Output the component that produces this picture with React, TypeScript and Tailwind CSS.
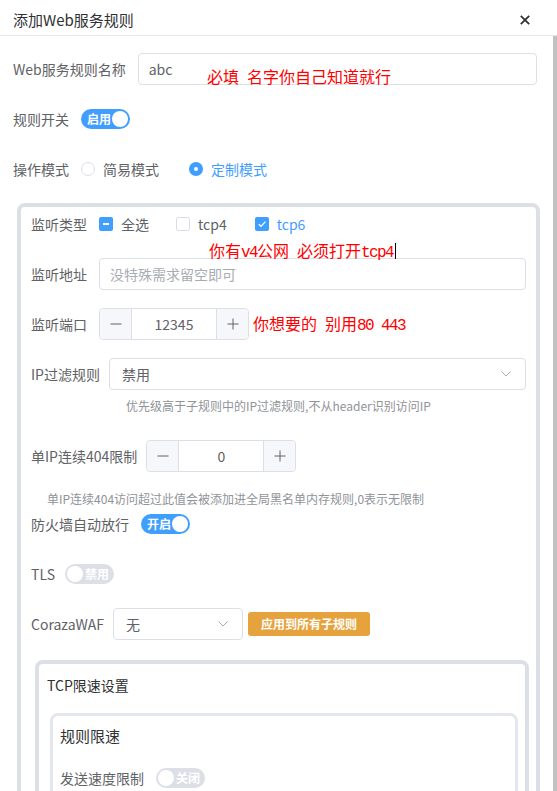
import React from "react";

const L = ({ children }: { children: React.ReactNode }) => (
  <span className="font-['Liberation_Mono',monospace] tracking-[-1.6px]">{children}</span>
);

const Red = ({ children, className = "" }: { children: React.ReactNode; className?: string }) => (
  <div
    className={`whitespace-pre text-[16px] leading-[16px] text-[#ff0000] font-['Noto_Sans_CJK_SC',sans-serif] ${className}`}
  >
    {children}
  </div>
);

const Switch = ({ on, text }: { on: boolean; text: string }) => (
  <div
    className={`flex h-5 w-[49px] shrink-0 items-center rounded-full ${on ? "bg-[#409eff]" : "bg-[#dcdfe6]"}`}
  >
    {on ? (
      <>
        <span className="pl-[6px] text-[12px] font-bold leading-none text-white">{text}</span>
        <span className="ml-auto mr-[2px] h-4 w-4 rounded-full bg-white" />
      </>
    ) : (
      <>
        <span className="ml-[2px] h-4 w-4 rounded-full bg-white" />
        <span className="ml-[2px] text-[12px] font-bold leading-none text-white">{text}</span>
      </>
    )}
  </div>
);

const Chevron = () => (
  <svg width="10" height="6" viewBox="0 0 10 6" className="ml-auto shrink-0">
    <polyline points="0.5,0.5 5,5 9.5,0.5" fill="none" stroke="#a8abb2" strokeWidth="1" />
  </svg>
);

const NumberInput = ({ value }: { value: string }) => (
  <div className="flex h-8 w-[150px] shrink-0 rounded-[4px] border border-[#dcdfe6]">
    <div className="flex w-8 items-center justify-center rounded-l-[4px] border-r border-[#dcdfe6] bg-[#f5f7fa]">
      <svg width="12" height="12" viewBox="0 0 12 12">
        <line x1="0.5" y1="6" x2="11.5" y2="6" stroke="#606266" strokeWidth="1" />
      </svg>
    </div>
    <div className="flex flex-1 items-center justify-center text-[14px] text-[#606266]">{value}</div>
    <div className="flex w-8 items-center justify-center rounded-r-[4px] border-l border-[#dcdfe6] bg-[#f5f7fa]">
      <svg width="12" height="12" viewBox="0 0 12 12">
        <line x1="0.5" y1="6" x2="11.5" y2="6" stroke="#606266" strokeWidth="1" />
        <line x1="6" y1="0.5" x2="6" y2="11.5" stroke="#606266" strokeWidth="1" />
      </svg>
    </div>
  </div>
);

const Label = ({ children, pr = "pr-3" }: { children: React.ReactNode; pr?: string }) => (
  <span className={`shrink-0 whitespace-nowrap ${pr} text-[14px] leading-[20px] text-[#606266]`}>{children}</span>
);

export default function App() {
  return (
    <div className="flex h-[791px] w-[557px] flex-col overflow-hidden bg-white font-['Noto_Sans_CJK_SC',sans-serif] text-[14px] text-[#606266]">
      <header className="flex h-[36px] shrink-0 items-center border-b border-[#e4e7ed] pl-[13px] pr-[27px] pt-[4px]">
        <span className="text-[15px] leading-[20px] text-[#303133]">添加Web服务规则</span>
        <svg width="10" height="10" viewBox="0 0 10 10" className="ml-auto">
          <line x1="0.8" y1="0.8" x2="9.2" y2="9.2" stroke="#303133" strokeWidth="1.8" />
          <line x1="9.2" y1="0.8" x2="0.8" y2="9.2" stroke="#303133" strokeWidth="1.8" />
        </svg>
      </header>

      <div className="flex min-h-0 flex-1">
        <div className="min-w-0 flex-1 pl-[13px] pr-[16px] pt-[17px]">
          {/* Row 1 */}
          <div className="relative flex h-8 items-center">
            <Label>Web服务规则名称</Label>
            <div className="flex h-8 flex-1 items-center rounded-[4px] border border-[#dcdfe6] pl-[10px] text-[14px] text-[#606266]">
              abc
            </div>
            <Red className="absolute left-[194px] top-[15px]">
              必填<L>{" "}</L>名字你自己知道就行
            </Red>
          </div>

          {/* Row 2 */}
          <div className="mt-[18px] flex h-8 items-center">
            <Label>规则开关</Label>
            <Switch on text="启用" />
          </div>

          {/* Row 3 */}
          <div className="mt-[18px] flex h-8 items-center">
            <Label>操作模式</Label>
            <span className="h-[14px] w-[14px] shrink-0 rounded-full border border-[#dcdfe6] bg-white" />
            <span className="ml-2 mr-[30px] leading-[20px] text-[#606266]">简易模式</span>
            <span className="flex h-[14px] w-[14px] shrink-0 items-center justify-center rounded-full bg-[#409eff]">
              <span className="h-1 w-1 rounded-full bg-white" />
            </span>
            <span className="ml-2 leading-[20px] text-[#409eff]">定制模式</span>
          </div>

          {/* Card */}
          <div className="ml-[4px] mr-[-3px] mt-[18px] rounded-[8px] border-4 border-[#dcdfe6] px-[10px] pt-[1px] pb-6">
            <div className="relative flex h-8 items-center">
              <Label>监听类型</Label>
              <span className="flex h-[14px] w-[14px] shrink-0 items-center justify-center rounded-[2px] bg-[#409eff]">
                <span className="h-[2px] w-[6px] bg-white" />
              </span>
              <span className="ml-2 mr-[27px] leading-[20px]">全选</span>
              <span className="h-[14px] w-[14px] shrink-0 rounded-[2px] border border-[#dcdfe6] bg-white" />
              <span className="ml-2 mr-[28px] leading-[20px]">tcp4</span>
              <span className="flex h-[14px] w-[14px] shrink-0 items-center justify-center rounded-[2px] bg-[#409eff]">
                <svg width="14" height="14" viewBox="0 0 14 14">
                  <polyline points="3.8,7.2 6,9.4 10.4,4.6" fill="none" stroke="white" strokeWidth="1.3" />
                </svg>
              </span>
              <span className="ml-2 leading-[20px] text-[#409eff]">tcp6</span>
              <Red className="absolute left-[178px] top-[33px]">
                你有<L>v4</L>公网<L>{" "}</L>必须打开<L>tcp4</L>
                <span className="ml-[2px] inline-block h-[16px] w-px translate-y-[2px] bg-black align-baseline" />
              </Red>
            </div>

            <div className="mt-[18px] flex h-8 items-center">
              <Label>监听地址</Label>
              <div className="flex h-8 flex-1 items-center rounded-[4px] border border-[#dcdfe6] pl-[10px] text-[#a8abb2]">
                没特殊需求留空即可
              </div>
            </div>

            <div className="mt-[18px] flex h-8 items-center">
              <Label>监听端口</Label>
              <NumberInput value="12345" />
              <Red className="ml-[4px]">
                你想要的<L>{" "}</L>别用<L>80 443</L>
              </Red>
            </div>

            <div className="mt-[18px] flex h-8 items-center">
              <Label pr="pr-[9px]">IP过滤规则</Label>
              <div className="flex h-8 flex-1 items-center rounded-[4px] border border-[#dcdfe6] pl-3 pr-[14px] text-[#606266]">
                <span>禁用</span>
                <Chevron />
              </div>
            </div>

            <div className="mt-[7px] h-[18px] whitespace-nowrap pl-[95px] text-[12px] leading-[18px] text-[#909399]">
              优先级高于子规则中的IP过滤规则,不从header识别访问IP
            </div>

            <div className="mt-[25px] flex h-8 items-center">
              <Label pr="pr-[9px]">单IP连续404限制</Label>
              <NumberInput value="0" />
            </div>

            <div className="mt-[18px] h-[18px] whitespace-nowrap pl-[16px] text-[12px] leading-[18px] text-[#909399]">
              单IP连续404访问超过此值会被添加进全局黑名单内存规则,0表示无限制
            </div>

            <div className="flex h-8 items-center">
              <Label>防火墙自动放行</Label>
              <Switch on text="开启" />
            </div>

            <div className="mt-[18px] flex h-8 items-center">
              <Label pr="pr-[10px]">TLS</Label>
              <Switch on={false} text="禁用" />
            </div>

            <div className="mt-[18px] flex h-8 items-center">
              <Label pr="pr-[9px]">CorazaWAF</Label>
              <div className="flex h-8 w-[130px] shrink-0 items-center rounded-[4px] border border-[#dcdfe6] pl-3 pr-[14px] text-[#606266]">
                <span>无</span>
                <Chevron />
              </div>
              <div className="ml-[5px] flex h-6 items-center rounded-[3px] bg-[#e6a23c] px-[13px] text-[12px] font-bold leading-none text-white">
                应用到所有子规则
              </div>
            </div>

            {/* TCP card */}
            <div className="ml-[4px] mr-[-3px] mt-[20px] rounded-[8px] border-4 border-[#dcdfe6] pl-[8px] pr-[7px] pt-[11px] pb-6">
              <div className="text-[14px] leading-[20px] text-[#303133]">TCP限速设置</div>
              <div className="ml-[3px] mt-[18px] rounded-[8px] border-[3px] border-[#e4e7ed] pl-[7px] pt-[10px] pb-6">
                <div className="text-[15px] leading-[20px] text-[#303133]">规则限速</div>
                <div className="mt-[16px] flex h-8 items-center">
                  <Label>发送速度限制</Label>
                  <Switch on={false} text="关闭" />
                </div>
              </div>
            </div>
          </div>
        </div>
        <div className="w-[4px] shrink-0 bg-[#c1c1c1]" />
      </div>
    </div>
  );
}
